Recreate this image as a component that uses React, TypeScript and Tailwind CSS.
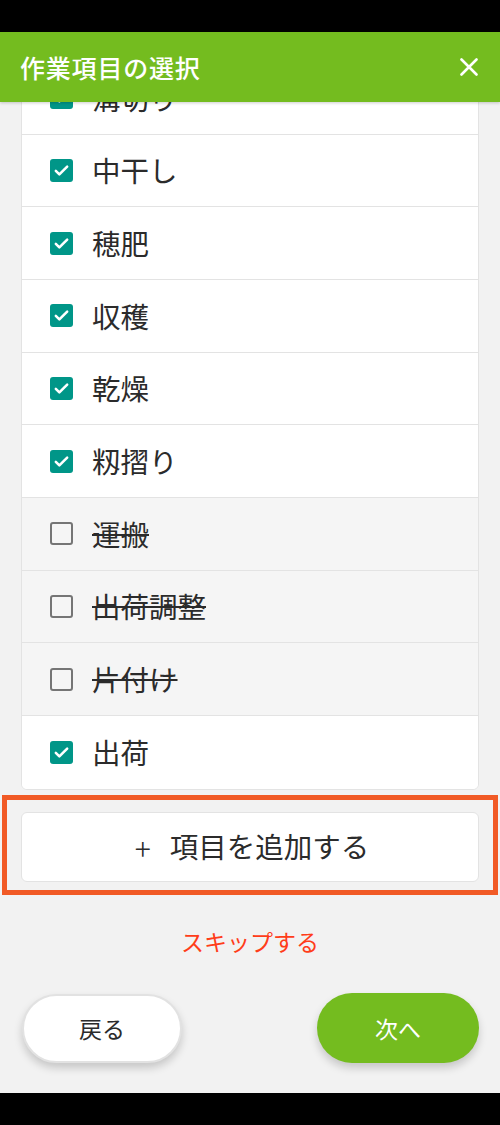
import React from "react";

type Item = { label: string; checked: boolean };

const items: Item[] = [
  { label: "溝切り", checked: true },
  { label: "中干し", checked: true },
  { label: "穂肥", checked: true },
  { label: "収穫", checked: true },
  { label: "乾燥", checked: true },
  { label: "籾摺り", checked: true },
  { label: "運搬", checked: false },
  { label: "出荷調整", checked: false },
  { label: "片付け", checked: false },
  { label: "出荷", checked: true },
];

function CheckBox({ checked }: { checked: boolean }) {
  if (checked) {
    return (
      <div className="w-[23px] h-[23px] rounded-[3px] bg-[#009688] flex items-center justify-center shrink-0">
        <svg width="17" height="17" viewBox="0 0 24 24" fill="none">
          <path d="M4 12.5l5 5L20 6.5" stroke="white" strokeWidth="3.6" strokeLinecap="round" strokeLinejoin="round" />
        </svg>
      </div>
    );
  }
  return <div className="w-[23px] h-[23px] rounded-[3px] border-[2.5px] border-[#757575] shrink-0" />;
}

export default function App() {
  const font = { fontFamily: '"Noto Sans CJK JP", "Noto Sans", sans-serif' };
  return (
    <div className="w-[500px] h-[1125px] bg-[#f2f2f2] flex flex-col overflow-hidden" style={font}>
      <div className="h-[32px] bg-black shrink-0" />
      <div className="h-[70px] bg-[#74bc1f] shrink-0 relative z-10 flex items-center justify-between pl-[20px] pr-[22px] shadow-[0_1px_3px_rgba(0,0,0,0.2)]">
        <span className="text-white text-[25px] font-medium leading-none tracking-[0.8px]">作業項目の選択</span>
        <svg width="18" height="18" viewBox="0 0 18 18">
          <path d="M1.5 1.5L16.5 16.5M16.5 1.5L1.5 16.5" stroke="white" strokeWidth="2.6" strokeLinecap="round" />
        </svg>
      </div>
      <div className="flex flex-col shrink-0">
        <div className="mx-[21px] -mt-[41px] bg-white border border-[#e3e3e3] rounded-b-[6px] overflow-hidden">
          {items.map((it, i) => (
            <div
              key={it.label}
              className={`h-[72.67px] flex items-center pl-[28px] gap-[19px] ${i < items.length - 1 ? "border-b border-[#e3e3e3]" : ""} ${it.checked ? "bg-white" : "bg-[#f5f5f5]"}`}
            >
              <CheckBox checked={it.checked} />
              <span className={`text-[28.5px] leading-none text-[#2b2b2b] ${it.checked ? "" : "line-through decoration-[2px] decoration-[#2b2b2b]"}`}>
                {it.label}
              </span>
            </div>
          ))}
        </div>
        <div className="mt-[5px] mx-[2px] border-[5px] border-[#f15a26] pt-[12px] pb-[8px] px-[14px]">
          <div className="h-[70px] bg-white border border-[#e3e3e3] rounded-[6px] flex items-center justify-center text-[#2b2b2b] pl-[4px]">
            <span className="text-[30px] leading-none font-light">+</span>
            <span className="text-[28.5px] leading-none ml-[19px]">項目を追加する</span>
          </div>
        </div>
        <div className="mt-[29px] text-center text-[23px] leading-[1.5] text-[#ff3d1a]">スキップする</div>
        <div className="mt-[35px] flex items-center justify-between pl-[22px] pr-[21px]">
          <div className="w-[160px] h-[69px] rounded-full bg-white border-2 border-[#e2e2e2] shadow-[0_5px_8px_rgba(0,0,0,0.18)] flex items-center justify-center text-[23px] text-[#2b2b2b]">
            戻る
          </div>
          <div className="w-[162px] h-[70px] rounded-full bg-[#74bc1f] shadow-[0_5px_8px_rgba(0,0,0,0.18)] flex items-center justify-center text-[23px] text-white">
            次へ
          </div>
        </div>
      </div>
      <div className="flex-1" />
      <div className="h-[32px] bg-black shrink-0" />
    </div>
  );
}
